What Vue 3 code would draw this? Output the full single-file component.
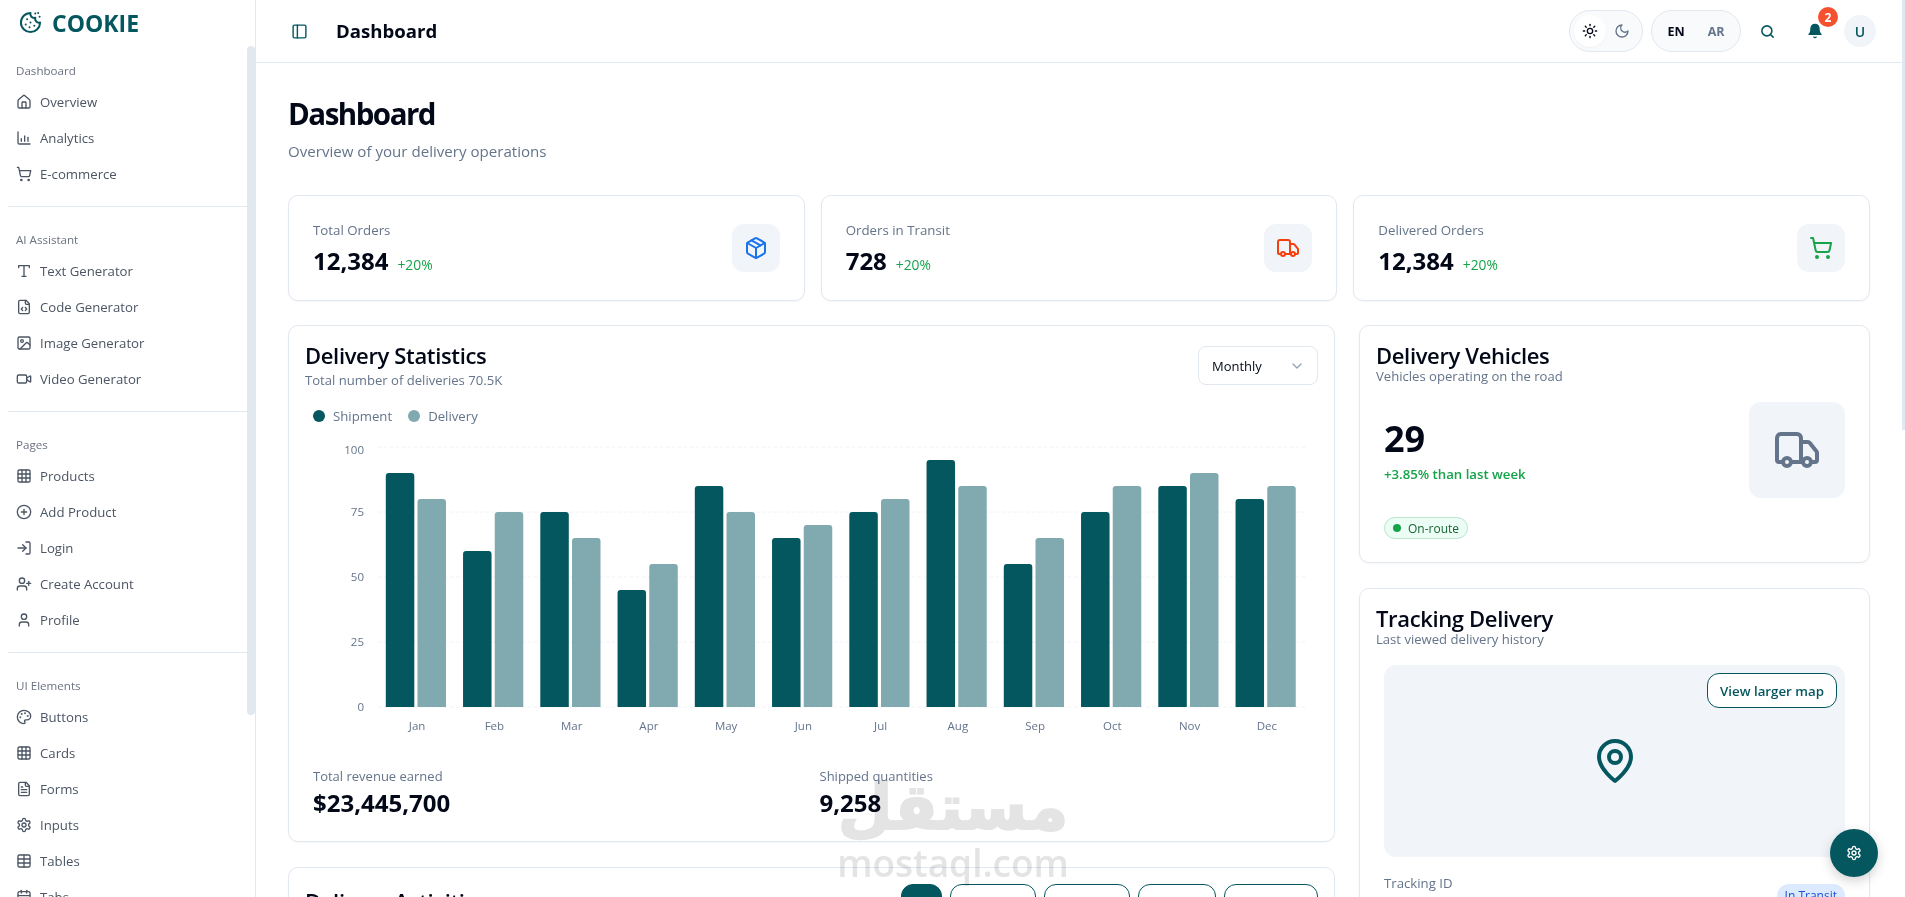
<script setup>
const icons = {
  house: '<path d="M15 21v-8a1 1 0 0 0-1-1h-4a1 1 0 0 0-1 1v8"/><path d="M3 10a2 2 0 0 1 .709-1.528l7-5.999a2 2 0 0 1 2.582 0l7 5.999A2 2 0 0 1 21 10v9a2 2 0 0 1-2 2H5a2 2 0 0 1-2-2z"/>',
  chart: '<path d="M3 3v16a2 2 0 0 0 2 2h16"/><path d="M18 17v-6"/><path d="M13 17V9"/><path d="M8 17v-4"/>',
  cart: '<circle cx="8" cy="21" r="1"/><circle cx="19" cy="21" r="1"/><path d="M2.05 2.05h2l2.66 12.42a2 2 0 0 0 2 1.58h9.78a2 2 0 0 0 1.95-1.57l1.65-7.43H5.12"/>',
  type: '<path d="M4 7V4h16v3"/><path d="M9 20h6"/><path d="M12 4v16"/>',
  code: '<path d="M10 12.5 8 15l2 2.5"/><path d="m14 12.5 2 2.5-2 2.5"/><path d="M14 2v4a2 2 0 0 0 2 2h4"/><path d="M15 2H6a2 2 0 0 0-2 2v16a2 2 0 0 0 2 2h12a2 2 0 0 0 2-2V7z"/>',
  image: '<rect x="3" y="3" width="18" height="18" rx="2"/><circle cx="9" cy="9" r="2"/><path d="m21 15-3.086-3.086a2 2 0 0 0-2.828 0L6 21"/>',
  video: '<path d="m16 13 5.223 3.482a.5.5 0 0 0 .777-.416V7.87a.5.5 0 0 0-.752-.432L16 10.5"/><rect x="2" y="6" width="14" height="12" rx="2"/>',
  grid: '<rect x="3" y="3" width="18" height="18" rx="2"/><path d="M3 9h18"/><path d="M3 15h18"/><path d="M9 3v18"/><path d="M15 3v18"/>',
  plus: '<circle cx="12" cy="12" r="10"/><path d="M8 12h8"/><path d="M12 8v8"/>',
  login: '<path d="M15 3h4a2 2 0 0 1 2 2v14a2 2 0 0 1-2 2h-4"/><polyline points="10 17 15 12 10 7"/><line x1="15" y1="12" x2="3" y2="12"/>',
  userplus: '<path d="M16 21v-2a4 4 0 0 0-4-4H6a4 4 0 0 0-4 4v2"/><circle cx="9" cy="7" r="4"/><path d="M19 8v6"/><path d="M22 11h-6"/>',
  user: '<path d="M19 21v-2a4 4 0 0 0-4-4H9a4 4 0 0 0-4 4v2"/><circle cx="12" cy="7" r="4"/>',
  palette: '<circle cx="13.5" cy="6.5" r=".5" fill="currentColor"/><circle cx="17.5" cy="10.5" r=".5" fill="currentColor"/><circle cx="8.5" cy="7.5" r=".5" fill="currentColor"/><circle cx="6.5" cy="12.5" r=".5" fill="currentColor"/><path d="M12 2C6.5 2 2 6.5 2 12s4.5 10 10 10c.926 0 1.648-.746 1.648-1.688 0-.437-.18-.835-.437-1.125-.29-.289-.438-.652-.438-1.125a1.64 1.64 0 0 1 1.668-1.668h1.996c3.051 0 5.555-2.503 5.555-5.554C21.965 6.012 17.461 2 12 2z"/>',
  file: '<path d="M15 2H6a2 2 0 0 0-2 2v16a2 2 0 0 0 2 2h12a2 2 0 0 0 2-2V7Z"/><path d="M14 2v4a2 2 0 0 0 2 2h4"/><path d="M10 9H8"/><path d="M16 13H8"/><path d="M16 17H8"/>',
  gear: '<path d="M12.22 2h-.44a2 2 0 0 0-2 2v.18a2 2 0 0 1-1 1.73l-.43.25a2 2 0 0 1-2 0l-.15-.08a2 2 0 0 0-2.73.73l-.22.38a2 2 0 0 0 .73 2.73l.15.1a2 2 0 0 1 1 1.72v.51a2 2 0 0 1-1 1.74l-.15.09a2 2 0 0 0-.73 2.73l.22.38a2 2 0 0 0 2.73.73l.15-.08a2 2 0 0 1 2 0l.43.25a2 2 0 0 1 1 1.73V20a2 2 0 0 0 2 2h.44a2 2 0 0 0 2-2v-.18a2 2 0 0 1 1-1.73l.43-.25a2 2 0 0 1 2 0l.15.08a2 2 0 0 0 2.73-.73l.22-.39a2 2 0 0 0-.73-2.73l-.15-.08a2 2 0 0 1-1-1.74v-.5a2 2 0 0 1 1-1.74l.15-.09a2 2 0 0 0 .73-2.73l-.22-.38a2 2 0 0 0-2.73-.73l-.15.08a2 2 0 0 1-2 0l-.43-.25a2 2 0 0 1-1-1.73V4a2 2 0 0 0-2-2z"/><circle cx="12" cy="12" r="3"/>',
  table: '<path d="M12 3v18"/><rect x="3" y="3" width="18" height="18" rx="2"/><path d="M3 9h18"/><path d="M3 15h18"/>',
  calendar: '<path d="M8 2v4"/><path d="M16 2v4"/><rect x="3" y="4" width="18" height="18" rx="2"/><path d="M3 10h18"/>',
  panel: '<rect x="3" y="3" width="18" height="18" rx="2"/><path d="M9 3v18"/>',
  box: '<path d="M11 21.73a2 2 0 0 0 2 0l7-4A2 2 0 0 0 21 16V8a2 2 0 0 0-1-1.73l-7-4a2 2 0 0 0-2 0l-7 4A2 2 0 0 0 3 8v8a2 2 0 0 0 1 1.73z"/><path d="M12 22V12"/><path d="M3.29 7 12 12l8.71-5"/><path d="m7.5 4.27 9 5.15"/>',
  truck: '<path d="M14 18V6a2 2 0 0 0-2-2H4a2 2 0 0 0-2 2v11a1 1 0 0 0 1 1h2"/><path d="M15 18H9"/><path d="M19 18h2a1 1 0 0 0 1-1v-3.65a1 1 0 0 0-.22-.624l-3.48-4.35A1 1 0 0 0 17.52 8H14"/><circle cx="17" cy="18" r="2"/><circle cx="7" cy="18" r="2"/>',
  sun: '<circle cx="12" cy="12" r="4"/><path d="M12 2v2"/><path d="M12 20v2"/><path d="m4.93 4.93 1.41 1.41"/><path d="m17.66 17.66 1.41 1.41"/><path d="M2 12h2"/><path d="M20 12h2"/><path d="m6.34 17.66-1.41 1.41"/><path d="m19.07 4.93-1.41 1.41"/>',
  moon: '<path d="M12 3a6 6 0 0 0 9 9 9 9 0 1 1-9-9Z"/>',
  search: '<circle cx="11" cy="11" r="8"/><path d="m21 21-4.3-4.3"/>',
  bell: '<path fill="currentColor" d="M6 8a6 6 0 0 1 12 0c0 7 3 9 3 9H3s3-2 3-9"/><path d="M10.3 21a1.94 1.94 0 0 0 3.4 0"/>',
  pin: '<path d="M20 10c0 6-8 12-8 12s-8-6-8-12a8 8 0 0 1 16 0Z"/><circle cx="12" cy="10" r="3"/>',
  chevron: '<path d="m6 9 6 6 6-6"/>',
  cookie: '<path d="M12 2a10 10 0 1 0 10 10 4 4 0 0 1-5-5 4 4 0 0 1-5-5"/><path d="M8.5 8.5v.01"/><path d="M16 15.5v.01"/><path d="M12 12v.01"/><path d="M11 17v.01"/><path d="M7 14v.01"/><path d="M17 2.5v.01"/><path d="M21.5 6v.01"/><path d="M20 2v.01"/>'
}

const nav = [
  { title: 'Dashboard', items: [['house', 'Overview'], ['chart', 'Analytics'], ['cart', 'E-commerce']] },
  { title: 'AI Assistant', items: [['type', 'Text Generator'], ['code', 'Code Generator'], ['image', 'Image Generator'], ['video', 'Video Generator']] },
  { title: 'Pages', items: [['grid', 'Products'], ['plus', 'Add Product'], ['login', 'Login'], ['userplus', 'Create Account'], ['user', 'Profile']] },
  { title: 'UI Elements', items: [['palette', 'Buttons'], ['grid', 'Cards'], ['file', 'Forms'], ['gear', 'Inputs'], ['table', 'Tables'], ['calendar', 'Tabs']] }
]

const stats = [
  { label: 'Total Orders', value: '12,384', icon: 'box', tone: 'blue' },
  { label: 'Orders in Transit', value: '728', icon: 'truck', tone: 'red' },
  { label: 'Delivered Orders', value: '12,384', icon: 'cart', tone: 'green' }
]

const months = ['Jan', 'Feb', 'Mar', 'Apr', 'May', 'Jun', 'Jul', 'Aug', 'Sep', 'Oct', 'Nov', 'Dec']
const shipment = [90, 60, 75, 45, 85, 65, 75, 95, 55, 75, 85, 80]
const delivery = [80, 75, 65, 55, 75, 70, 80, 85, 65, 85, 90, 85]
const ticks = [100, 75, 50, 25, 0]
const plotLeft = 73
const plotBase = 270
const slot = 77.25
const y = v => plotBase - v * 2.6
const barPath = (x, v, w = 28.5) => {
  const t = y(v)
  return `M${x} ${plotBase}V${t + 3}a3 3 0 0 1 3-3H${x + w - 3}a3 3 0 0 1 3 3V${plotBase}Z`
}

const filters = [['All', 41, true], ['Pending', 86], ['Shipped', 86], ['Transit', 78], ['Delivered', 94]]
</script>

<template>
  <div class="app">
    <aside class="sidebar">
      <div class="brand">
        <svg class="logo" viewBox="0 0 24 24" v-html="icons.cookie"></svg>
        <span>COOKIE</span>
      </div>
      <nav class="nav">
        <section v-for="group in nav" :key="group.title" class="group">
          <h4>{{ group.title }}</h4>
          <a v-for="item in group.items" :key="item[1]" class="nav-item">
            <svg class="ico" viewBox="0 0 24 24" v-html="icons[item[0]]"></svg>
            <span>{{ item[1] }}</span>
          </a>
        </section>
      </nav>
      <div class="side-thumb"></div>
    </aside>

    <div class="main">
      <header class="topbar">
        <svg class="ico toggle" viewBox="0 0 24 24" v-html="icons.panel"></svg>
        <div class="top-title">Dashboard</div>
        <div class="top-right">
          <div class="pill theme">
            <span class="sun-btn"><svg class="ico" viewBox="0 0 24 24" v-html="icons.sun"></svg></span>
            <span class="moon-btn"><svg class="ico" viewBox="0 0 24 24" v-html="icons.moon"></svg></span>
          </div>
          <div class="pill lang">
            <span class="en">EN</span>
            <span class="ar">AR</span>
          </div>
          <svg class="search" viewBox="0 0 24 24" v-html="icons.search"></svg>
          <span class="bell-wrap">
            <svg class="ico bell" viewBox="0 0 24 24" v-html="icons.bell"></svg>
            <span class="badge">2</span>
          </span>
          <span class="avatar">U</span>
        </div>
      </header>

      <main class="content">
        <h1>Dashboard</h1>
        <p class="lead">Overview of your delivery operations</p>

        <div class="stat-row">
          <div v-for="s in stats" :key="s.label" class="card stat">
            <div>
              <div class="stat-label">{{ s.label }}</div>
              <div class="stat-line">
                <span class="stat-value">{{ s.value }}</span>
                <span class="stat-delta">+20%</span>
              </div>
            </div>
            <span class="stat-icon" :class="s.tone">
              <svg viewBox="0 0 24 24" v-html="icons[s.icon]"></svg>
            </span>
          </div>
        </div>

        <div class="columns">
          <div class="col">
            <div class="card chart-card">
              <div class="card-head">
                <div>
                  <h2>Delivery Statistics</h2>
                  <p class="sub spaced">Total number of deliveries 70.5K</p>
                </div>
                <div class="select">
                  <span>Monthly</span>
                  <svg class="ico chev" viewBox="0 0 24 24" v-html="icons.chevron"></svg>
                </div>
              </div>
              <div class="legend">
                <span class="dot dark"></span><span class="legend-text">Shipment</span>
                <span class="dot light"></span><span class="legend-text">Delivery</span>
              </div>
              <svg class="bars" width="1015" height="303" viewBox="0 0 1015 303">
                <g v-for="t in ticks" :key="t">
                  <line :x1="plotLeft" :x2="plotLeft + slot * 12" :y1="y(t)" :y2="y(t)" class="grid-line" />
                  <text :x="59" :y="t === 100 ? y(t) + 7 : y(t) + 4" text-anchor="end" class="tick">{{ t }}</text>
                </g>
                <g v-for="(m, i) in months" :key="m">
                  <path :d="barPath(plotLeft + slot * i + 7.8, shipment[i])" class="bar-dark" />
                  <path :d="barPath(plotLeft + slot * i + 39.5, delivery[i])" class="bar-light" />
                  <text :x="plotLeft + slot * i + slot / 2 + 0.5" y="293" text-anchor="middle" class="tick">{{ m }}</text>
                </g>
              </svg>
              <div class="totals">
                <div>
                  <div class="total-label">Total revenue earned</div>
                  <div class="total-value">$23,445,700</div>
                </div>
                <div>
                  <div class="total-label">Shipped quantities</div>
                  <div class="total-value">9,258</div>
                </div>
              </div>
            </div>

            <div class="card activity">
              <h2>Delivery Activities</h2>
              <div class="filters">
                <button v-for="f in filters" :key="f[0]" class="filter" :class="{ on: f[2] }" :style="{ width: f[1] + 'px' }">{{ f[0] }}</button>
              </div>
            </div>
          </div>

          <div class="col">
            <div class="card vehicles">
              <h2>Delivery Vehicles</h2>
              <p class="sub tight">Vehicles operating on the road</p>
              <div class="veh-body">
                <div class="veh-info">
                  <div class="veh-num">29</div>
                  <div class="veh-delta">+3.85% than last week</div>
                </div>
                <span class="veh-icon"><svg viewBox="0 0 24 24" v-html="icons.truck"></svg></span>
              </div>
              <span class="route"><i></i>On-route</span>
            </div>

            <div class="card tracking">
              <h2>Tracking Delivery</h2>
              <p class="sub tight">Last viewed delivery history</p>
              <div class="map">
                <button class="map-btn">View larger map</button>
                <svg class="pin" viewBox="0 0 24 24" v-html="icons.pin"></svg>
              </div>
              <div class="track-row">
                <span class="track-label">Tracking ID</span>
                <span class="transit">In Transit</span>
              </div>
            </div>
          </div>
        </div>
      </main>
    </div>

    <div class="page-thumb"></div>
    <div class="watermark">
      <div class="wm-ar">مستقل</div>
      <div class="wm-en">mostaql.com</div>
    </div>
    <button class="fab"><svg viewBox="0 0 24 24" v-html="icons.gear"></svg></button>
  </div>
</template>

<style>
html, body { margin: 0; background: #fff; overflow: hidden; }
</style>

<style scoped>
.app {
  --teal: #04575f;
  --muted: #64748b;
  --line: #e2e8f0;
  --ink: #020817;
  position: relative;
  display: flex;
  width: 1905px;
  height: 897px;
  overflow: hidden;
  background: #fff;
  color: var(--ink);
  font-family: "Open Sans", "Noto Sans", sans-serif;
}
svg { fill: none; stroke: currentColor; stroke-width: 2; stroke-linecap: round; stroke-linejoin: round; display: block; }
.ico { width: 16px; height: 16px; flex: none; }
h1, h2, h4, p { margin: 0; }

.sidebar { position: relative; width: 256px; flex: none; border-right: 1px solid var(--line); box-sizing: border-box; overflow: hidden; }
.brand { display: flex; align-items: center; gap: 10px; height: 46px; padding-left: 19px; box-sizing: border-box; color: var(--teal); font-size: 23px; font-weight: 700; padding-bottom: 1px; }
.logo { width: 23px; height: 23px; stroke-width: 2.1; }
.nav { padding: 0 8px; }
.group { padding: 25px 8px 14px; border-bottom: 1px solid var(--line); }
.group:first-child { padding-top: 17px; }
.group:last-child { border-bottom: 0; }
.group h4 { font-size: 11.6px; font-weight: 400; line-height: 16px; color: #6b7280; margin-bottom: 5px; }
.nav-item { display: flex; align-items: center; gap: 8px; height: 36px; font-size: 13.2px; color: #4b5563; }
.side-thumb { position: absolute; right: 0; top: 46px; width: 8px; height: 669px; background: var(--line); border-radius: 4px; }

.main { flex: 1; min-width: 0; display: flex; flex-direction: column; }
.topbar { height: 63px; flex: none; box-sizing: border-box; border-bottom: 1px solid var(--line); display: flex; align-items: center; padding: 0 29px 0 35px; }
.toggle { color: var(--teal); width: 17px; height: 17px; }
.top-title { margin-left: 28px; padding-bottom: 2px; font-size: 18.6px; font-weight: 700; }
.top-right { margin-left: auto; display: flex; align-items: center; }
.pill { height: 42px; box-sizing: border-box; border: 1px solid var(--line); background: #f8fafc; border-radius: 21px; display: flex; align-items: center; }
.theme { width: 74px; padding-left: 4px; }
.sun-btn { width: 32px; height: 32px; background: #fff; border-radius: 50%; display: flex; align-items: center; justify-content: center; box-shadow: 0 1px 2px rgba(0,0,0,.04); }
.moon-btn { width: 32px; height: 32px; display: flex; align-items: center; justify-content: center; color: #64748b; }
.lang { width: 90px; margin-left: 8px; justify-content: space-around; font-size: 12.5px; font-weight: 700; padding: 0 4px; }
.ar { color: #64748b; }
.search { color: var(--teal); width: 15px; height: 15px; stroke-width: 2.5; margin-left: 19px; }
.bell-wrap { position: relative; margin-left: 32px; color: var(--teal); }
.badge { position: absolute; left: 11px; top: -16px; width: 20px; height: 20px; border-radius: 50%; background: #f4512f; color: #fff; font-size: 12px; font-weight: 700; display: flex; align-items: center; justify-content: center; }
.avatar { margin-left: 21px; width: 32px; height: 32px; border-radius: 50%; background: #f1f5f9; color: var(--teal); font-size: 14px; font-weight: 600; display: flex; align-items: center; justify-content: center; }

.content { flex: 1; padding: 33px 35px 0 32px; overflow: hidden; }
h1 { font-size: 29.5px; line-height: 36px; font-weight: 700; letter-spacing: -1.5px; color: var(--ink); }
.lead { margin-top: 7px; font-size: 15.1px; line-height: 24px; color: var(--muted); }
.card { background: #fff; border: 1px solid var(--line); border-radius: 10px; box-sizing: border-box; box-shadow: 0 1px 2px rgba(0,0,0,.04); }
.stat-row { display: grid; grid-template-columns: repeat(3, 1fr); gap: 16px; margin-top: 32px; }
.stat { height: 106px; padding: 0 24px; display: flex; align-items: center; justify-content: space-between; }
.stat-label { font-size: 13.3px; font-weight: 500; color: var(--muted); line-height: 20px; }
.stat-line { display: flex; align-items: baseline; gap: 9px; margin-top: 5px; }
.stat-value { font-size: 24px; font-weight: 700; line-height: 32px; }
.stat-delta { font-size: 13.8px; color: #16a34a; }
.stat-icon { width: 48px; height: 48px; border-radius: 12px; background: #f1f5f9; display: flex; align-items: center; justify-content: center; }
.stat-icon svg { width: 24px; height: 24px; }
.blue { color: #1a73e8; }
.red { color: #f4400f; }
.green { color: #16a34a; }

.columns { display: grid; grid-template-columns: 1047px 1fr; gap: 24px; margin-top: 24px; align-items: start; }
.col { display: flex; flex-direction: column; gap: 25px; min-width: 0; }
h2 { font-size: 22px; font-weight: 600; line-height: 30px; letter-spacing: -.35px; }
.sub { font-size: 13.1px; line-height: 16px; color: var(--muted); }
.sub.spaced { margin-top: 2px; }
.sub.tight { margin-top: -2px; }
.chart-card { height: 517px; padding: 14px 16px 0; }
.card-head { display: flex; justify-content: space-between; align-items: flex-start; }
.select { width: 120px; height: 39px; box-sizing: border-box; border: 1px solid var(--line); border-radius: 8px; display: flex; align-items: center; justify-content: space-between; padding: 0 12px 0 13px; font-size: 13px; margin-top: 6px; }
.chev { color: #94a3b8; }
.legend { display: flex; align-items: center; padding-left: 8px; margin-top: 18px; height: 20px; font-size: 13.2px; }
.dot { width: 12px; height: 12px; border-radius: 50%; }
.dark { background: var(--teal); }
.light { background: #81a9b0; }
.legend-text { color: var(--muted); margin-left: 8px; margin-right: 16px; }
.bars { margin-top: 11px; fill: initial; stroke: none; }
.grid-line { stroke: #eef2f6; stroke-width: 1; stroke-dasharray: 3 3; }
.tick { fill: var(--muted); stroke: none; font-size: 11.5px; }
.bar-dark { fill: var(--teal); stroke: none; }
.bar-light { fill: #81a9b0; stroke: none; }
.totals { display: grid; grid-template-columns: 1fr 1fr; gap: 16px; padding: 0 8px; margin-top: 26px; }
.total-label { font-size: 13px; line-height: 20px; color: var(--muted); }
.total-value { font-size: 24px; font-weight: 700; line-height: 32px; margin-top: 1px; }
.activity { height: 120px; padding: 18px 16px 0; position: relative; }
.filters { position: absolute; top: 16px; right: 16px; display: flex; gap: 8px; }
.filter { height: 36px; box-sizing: border-box; border: 1px solid var(--teal); background: #fff; border-radius: 12px; color: var(--teal); font: 600 13px "Open Sans", sans-serif; padding: 0; }
.filter.on { background: var(--teal); color: #fff; }

.vehicles { height: 238px; padding: 14px 16px 0; }
.veh-body { display: flex; justify-content: space-between; align-items: center; padding: 0 8px; margin-top: 18px; height: 96px; }
.veh-num { font-size: 36px; font-weight: 700; line-height: 40px; margin-top: 3px; }
.veh-delta { font-size: 13.2px; font-weight: 600; color: #16a34a; line-height: 20px; margin-top: 5px; }
.veh-icon { width: 96px; height: 96px; border-radius: 12px; background: #f1f5f9; color: #64748b; display: flex; align-items: center; justify-content: center; }
.veh-icon svg { width: 48px; height: 48px; }
.route { margin: 19px 0 0 8px; display: inline-flex; align-items: center; gap: 7px; height: 22px; box-sizing: border-box; padding: 0 8px; border: 1px solid #bbe5d0; background: #ecfdf5; border-radius: 11px; font-size: 12px; font-weight: 500; color: #166534; }
.route i { width: 8px; height: 8px; border-radius: 50%; background: #16a34a; }
.tracking { height: 400px; padding: 14px 16px 0; }
.map { position: relative; margin: 18px 8px 0; height: 192px; border-radius: 12px; background: #f1f5f9; display: flex; align-items: center; justify-content: center; }
.pin { width: 48px; height: 48px; color: var(--teal); }
.map-btn { position: absolute; top: 8px; right: 8px; width: 130px; height: 35px; background: #fff; border: 1px solid var(--teal); border-radius: 12px; color: var(--teal); font: 600 13.3px "Open Sans", sans-serif; padding: 0; }
.track-row { display: flex; justify-content: space-between; padding: 0 8px; margin-top: 16px; }
.track-label { font-size: 13.2px; line-height: 20px; color: var(--muted); }
.transit { height: 24px; margin-top: 11px; padding: 0 8px; border-radius: 12px; background: #dbeafe; color: #1d4ed8; font-size: 12px; font-weight: 500; line-height: 24px; }

.page-thumb { position: absolute; right: 0; top: 0; width: 3px; height: 430px; background: var(--line); }
.fab { position: absolute; left: 1830px; top: 829px; width: 48px; height: 48px; border: 0; border-radius: 50%; background: var(--teal); color: #fff; display: flex; align-items: center; justify-content: center; box-shadow: 0 4px 12px rgba(0,0,0,.18); padding: 0; }
.fab svg { width: 16px; height: 16px; }
.watermark { position: absolute; left: 836px; top: 772px; width: 234px; text-align: center; color: #e4e4e4; mix-blend-mode: multiply; pointer-events: none; }
.wm-ar { font-family: "DejaVu Sans", sans-serif; font-size: 63px; font-weight: 700; line-height: 72px; -webkit-text-stroke: 2px #e4e4e4; }
.wm-en { font-size: 37px; font-weight: 600; line-height: 38px; }
</style>
